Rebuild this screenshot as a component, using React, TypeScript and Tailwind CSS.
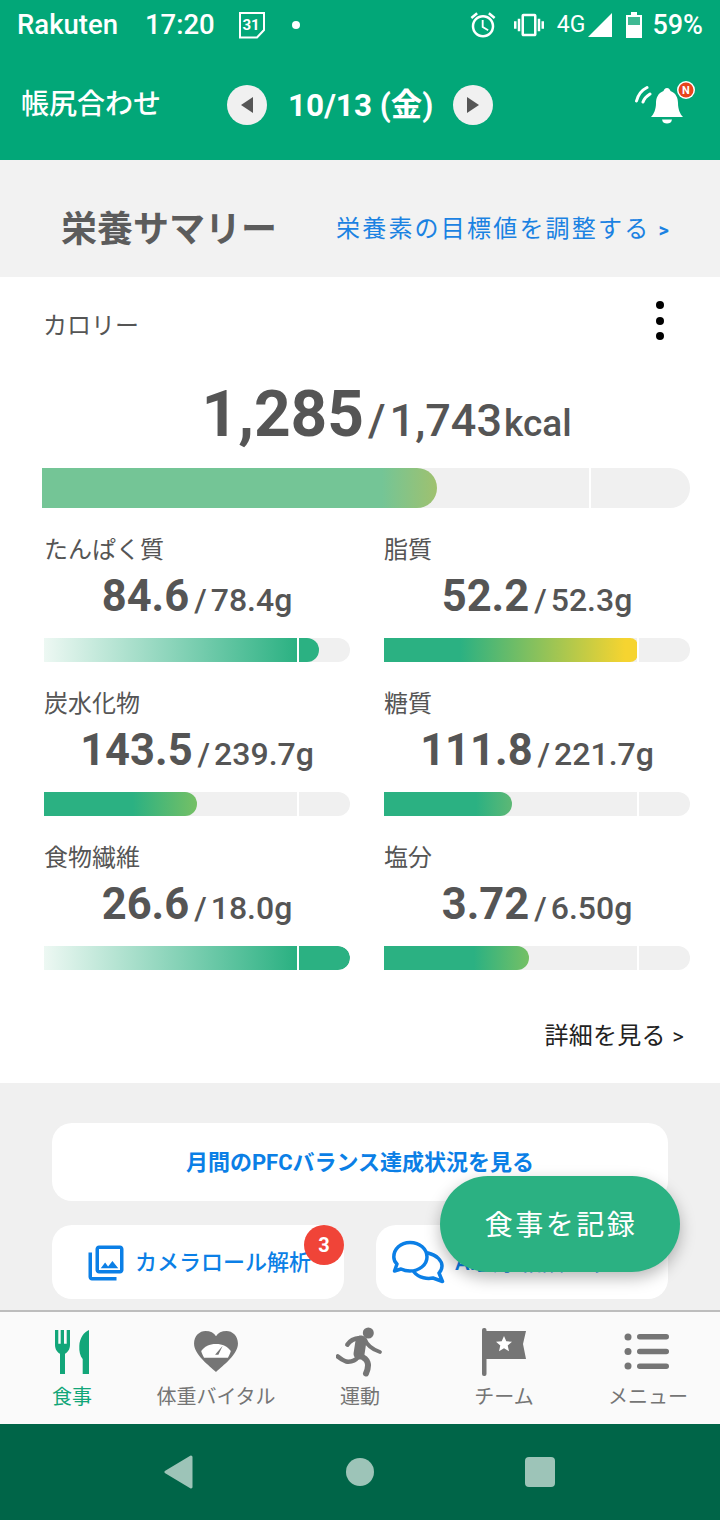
import React from "react";
import { MdOutlinePhotoLibrary, MdOutlineAlarm, MdVibration } from "react-icons/md";

const nutrients = [
  { label: "たんぱく質", v: "84.6", t: "78.4g", w: 275, bg: "linear-gradient(to right,#edf8f3 0%,#2bb182 92%)", solid: true },
  { label: "脂質", v: "52.2", t: "52.3g", w: 254, bg: "linear-gradient(to right,#2bb182 30%,#f6d430 95%)", small: true },
  { label: "炭水化物", v: "143.5", t: "239.7g", w: 153, bg: "linear-gradient(to right,#2bb182 58%,#75c065 100%)" },
  { label: "糖質", v: "111.8", t: "221.7g", w: 128, bg: "linear-gradient(to right,#2bb182 72%,#5db875 100%)" },
  { label: "食物繊維", v: "26.6", t: "18.0g", w: 306, bg: "linear-gradient(to right,#edf8f3 0%,#2bb182 82%)" },
  { label: "塩分", v: "3.72", t: "6.50g", w: 145, bg: "linear-gradient(to right,#2bb182 62%,#75c065 100%)" },
];

function Nutrient({ n }: { n: (typeof nutrients)[number] }) {
  return (
    <div className="w-[306px] h-[154px] flex flex-col">
      <div className="h-[28px] mt-[3px] text-[24px] leading-[28px] text-[#555]">{n.label}</div>
      <div className="h-[50px] mt-[8px] flex items-baseline justify-center text-[#555]">
        <span className="text-[43.500px] leading-[50px] font-bold">{n.v}</span>
        <span className="ml-[5px] text-[32px] leading-[50px] font-medium">/</span>
        <span className="ml-[4px] text-[32px] leading-[50px] font-medium">{n.t}</span>
      </div>
      <div className="relative h-[24px] mt-[16px] w-full rounded-r-full bg-[#f0f0f0] overflow-hidden">
        <div
          className={n.small ? "h-full rounded-r-lg" : "h-full rounded-r-full"}
          style={{ width: n.w, background: n.bg }}
        />
        <div className="absolute top-0 left-[253px] h-full w-[2px] bg-white" />
      </div>
    </div>
  );
}

function Utensils({ c }: { c: string }) {
  return (
    <svg width="48" height="48" viewBox="0 0 48 48" fill={c}>
      <path d="M7 1h3.300v13.700h2.400V1H16v13.700h2.700V1H22v15c0 4.500-2.500 7.500-5 8.700V45h-5V24.700C9.500 23.500 7 20.500 7 16z" />
      <path d="M41 1V45H34.700V30C32 27 31 22 31.300 17 31.600 9 36 3 41 1Z" />
    </svg>
  );
}

function HeartGauge() {
  return (
    <svg width="46" height="42" viewBox="0 0 48 44" className="mb-[3px]">
      <path fill="#757575" d="M24 43 C17 36 1 25 1 13 C1 5 7 0 13 0 C18 0 22 2 24 5.500 C26 2 30 0 35 0 C41 0 47 5 47 13 C47 25 31 36 24 43Z" />
      <path fill="#fff" d="M8.500 21 C12 16 17 13.500 24 13.500 C31 13.500 36 16 39.500 21 C39 23 37.500 26.500 36.500 28 H11.500 C10.500 26.500 9 23 8.500 21Z" />
      <path fill="#757575" d="M31 15.500 L26.500 25 L23 25 Z" />
    </svg>
  );
}

function Runner() {
  return (
    <svg width="48" height="50" viewBox="0 0 48 50" fill="none" stroke="#757575" strokeLinecap="round" strokeLinejoin="round" className="mb-[2px]">
      <circle cx="32.300" cy="6" r="5.500" fill="#757575" stroke="none" />
      <path d="M11.300 17.700 Q15 11.700 24 11" strokeWidth="4.500" />
      <path d="M25 14 L23 27" strokeWidth="11" />
      <path d="M29 12.500 Q32 21 44 25" strokeWidth="3.800" />
      <path d="M24 29 Q36 33 30 46.500" strokeWidth="6" />
      <path d="M22 30 Q18 35.500 10 34.500 Q6 33 1.800 29.500" strokeWidth="4.500" />
    </svg>
  );
}

function Flag() {
  return (
    <svg width="48" height="50" viewBox="0 0 48 50">
      <rect x="2" y="0" width="4.500" height="48" rx="2" fill="#757575" />
      <path fill="#757575" d="M5 3 H46 L43 16 L46 31 H5Z" />
      <path fill="#fff" d="M24 8l2.300 5.300 5.700.5-4.300 3.800 1.300 5.600-5-3-5 3 1.300-5.600-4.300-3.800 5.700-.5z" />
    </svg>
  );
}

function ListIcon() {
  return (
    <svg width="48" height="40" viewBox="0 0 48 40" fill="#757575">
      <circle cx="4" cy="4" r="3.500" />
      <circle cx="4" cy="18.500" r="3.500" />
      <circle cx="4" cy="33" r="3.500" />
      <rect x="13" y="1" width="32" height="5.500" rx="2.750" />
      <rect x="13" y="15.750" width="32" height="5.500" rx="2.750" />
      <rect x="13" y="30.500" width="32" height="5.500" rx="2.750" />
    </svg>
  );
}

function NavItem({ icon, label, active }: { icon: React.ReactNode; label: string; active?: boolean }) {
  return (
    <div className="w-[144px] flex flex-col items-center">
      <div className="h-[52px] w-full flex items-center justify-center">{icon}</div>
      <div className={active ? "mt-[5px] text-[20px] leading-[26px] text-[#12a679]" : "mt-[5px] text-[20px] leading-[26px] text-[#757575]"}>
        {label}
      </div>
    </div>
  );
}

export default function App() {
  return (
    <div className="relative w-[720px] h-[1520px] overflow-hidden flex flex-col bg-[#f0f0f0] font-['Roboto','Noto_Sans_CJK_JP',sans-serif]">
      <div className="h-[160px] shrink-0 bg-[#02a778] text-white flex flex-col">
        <div className="h-[50px] flex items-center pl-[17px] pr-[17px]">
          <span className="text-[27.500px] font-medium leading-[50px]">Rakuten</span>
          <span className="ml-[27px] text-[27.500px] font-medium leading-[50px]">17:20</span>
          <svg className="ml-[23px]" width="28" height="28" viewBox="0 0 28 28">
            <path d="M2 2 H26 V19 L19 26.500 H2Z" fill="none" stroke="#fff" strokeWidth="2" />
            <text x="13" y="19" textAnchor="middle" fontSize="15" fontWeight="700" fill="#fff">31</text>
          </svg>
          <span className="ml-[26px] w-[8px] h-[8px] rounded-full bg-white" />
          <div className="ml-auto flex items-center">
            <MdOutlineAlarm size={30} className="text-white" />
            <MdVibration size={30} className="ml-[16px] text-white" />
            <span className="ml-[13px] text-[23px] font-normal">4G</span>
            <svg width="26" height="26" viewBox="0 0 26 26" className="ml-[2px]"><path d="M1 25 L25 1 V25Z" fill="#fff" /></svg>
            <svg width="16" height="26" viewBox="0 0 16 26" className="ml-[13px]">
              <path d="M5 0 H11 V3 H16 V26 H0 V3 H5Z" fill="#fff" />
              <rect x="2" y="5" width="12" height="8" fill="#3fb993" />
            </svg>
            <span className="ml-[10px] text-[27px] font-medium">59%</span>
          </div>
        </div>
        <div className="relative flex-1 flex items-center pl-[21px]">
          <span className="w-[206px] text-[28px] leading-[40px] font-medium">帳尻合わせ</span>
          <span className="w-[40px] h-[40px] rounded-full bg-[#f0f0f0] flex items-center justify-center">
            <svg width="12" height="16" viewBox="0 0 12 16"><path d="M12 0V16L0 8Z" fill="#555" /></svg>
          </span>
          <span className="ml-[21px] mt-[2px] w-[145px] text-[31.500px] leading-[40px] font-bold whitespace-nowrap">10/13 (金)</span>
          <span className="ml-[20px] w-[40px] h-[40px] rounded-full bg-[#f0f0f0] flex items-center justify-center">
            <svg width="12" height="16" viewBox="0 0 12 16"><path d="M0 0V16L12 8Z" fill="#555" /></svg>
          </span>
          <svg className="ml-[142px]" width="64" height="48" viewBox="0 0 64 48">
            <path d="M1.500 20 C3 14 7 9 12 6.500 M8 21 C9 18 11 15.500 15 13" fill="none" stroke="#fff" strokeWidth="3" strokeLinecap="round" />
            <path d="M32 7 C34 7 35 8.500 35.500 10 C41 12 43 17 43 22 C43 28 45 33 48 36 H16 C19 33 21 28 21 22 C21 17 23 12 28.500 10 C29 8.500 30 7 32 7Z" fill="#fff" />
            <path d="M27 38.500 H37 C36.500 41.500 34.500 42.500 32 42.500 C29.500 42.500 27.500 41.500 27 38.500Z" fill="#fff" />
            <circle cx="51" cy="9" r="9" fill="#fff" />
            <circle cx="51" cy="9" r="7.500" fill="#e8431c" />
            <text x="51" y="13" textAnchor="middle" fontSize="11" fontWeight="700" fill="#fff">N</text>
          </svg>
        </div>
      </div>

      <div className="h-[117px] shrink-0 bg-[#f2f2f2] flex items-center pl-[61px] pt-[22px]">
        <span className="text-[36px] leading-[44px] font-bold text-[#5c5c5c] w-[275px]">栄養サマリー</span>
        <span className="text-[24px] leading-[32px] tracking-[2.200px] text-[#1b82e2] whitespace-nowrap">栄養素の目標値を調整する <b className="text-[20px]">&gt;</b></span>
      </div>

      <div className="h-[806px] shrink-0 bg-white flex flex-col">
        <div className="h-[98px] px-[43px] flex justify-between relative">
          <span className="mt-[33px] text-[24px] leading-[32px] text-[#555]">カロリー</span>
          <div className="mr-[13px] mt-[24px] flex flex-col gap-[7.500px] items-center w-[8px]">
            <span className="w-[8px] h-[8px] rounded-full bg-black" />
            <span className="w-[8px] h-[8px] rounded-full bg-black" />
            <span className="w-[8px] h-[8px] rounded-full bg-black" />
          </div>
        </div>
        <div className="h-[80px] pl-[53px] flex items-baseline justify-center text-[#555]">
          <span className="text-[64px] leading-[80px] font-bold">1,285</span>
          <span className="ml-[4px] text-[45px] leading-[80px] font-medium">/</span>
          <span className="ml-[4px] text-[45px] leading-[80px] font-medium">1,743</span>
          <span className="ml-[2px] text-[37px] leading-[80px] font-medium">kcal</span>
        </div>
        <div className="relative ml-[42px] mt-[13px] w-[648px] h-[40px] rounded-r-full bg-[#f0f0f0] overflow-hidden">
          <div className="h-full w-[395px] rounded-r-full bg-[linear-gradient(to_right,#74c596_86%,#9fc16f_100%)]" />
          <div className="absolute top-0 left-[547px] h-full w-[2px] bg-white" />
        </div>
        <div className="ml-[44px] mt-[25px] grid grid-cols-[306px_306px] gap-x-[34px]">
          {nutrients.map((n) => (
            <Nutrient key={n.label} n={n} />
          ))}
        </div>
        <div className="mt-[25px] pr-[36px] text-right text-[24px] leading-[32px] tracking-[0.300px] text-[#222]">
          詳細を見る <span className="text-[22px]">&gt;</span>
        </div>
      </div>

      <div className="flex-1 min-h-0 overflow-hidden pt-[40px] px-[52px]">
        <div className="h-[78px] rounded-[20px] bg-white flex items-center justify-center text-[22px] font-bold text-[#0b7fe6]">
          月間のPFCバランス達成状況を見る
        </div>
        <div className="mt-[24px] flex gap-[32px]">
          <div className="relative w-[292px] h-[74px] rounded-[20px] bg-white flex items-center pl-[33px] text-[22px] font-medium text-[#0b7fe6]">
            <MdOutlinePhotoLibrary size={42} className="mt-[2px] mr-[8px]" />
            カメラロール解析
            <span className="absolute left-[252px] top-0 w-[40px] h-[40px] rounded-full bg-[#f04438] text-white text-[20px] font-bold flex items-center justify-center">3</span>
          </div>
          <div className="w-[292px] h-[74px] rounded-[20px] bg-white flex items-center pl-[16px] text-[22px] font-medium text-[#0b7fe6] whitespace-nowrap">
            <svg width="54" height="44" viewBox="0 0 54 44" fill="none" stroke="#0b7fe6" strokeWidth="3.500" strokeLinejoin="round" strokeLinecap="round" className="mr-[9px] shrink-0">
              <path d="M18 2.500 C28 2.500 35 9 35 17 C35 25 27 31 18 31 C15 31 12 30.500 9 29 L2.500 31 L5 24 C2.800 22 1.800 19.500 1.800 17 C1.800 9 8.500 2.500 18 2.500Z" />
              <path d="M36 13 C45 15 50 21 50 26 C50 29 49 31 47 33 L50.500 41.500 L41 38 C36 39 27 38.500 22 32" />
            </svg>
            AI食事相談チャット
          </div>
        </div>
      </div>

      <div className="h-[114px] shrink-0 border-t-2 border-[#bdbdbd] bg-[#fafafa] flex pt-[15px]">
        <NavItem active label="食事" icon={<Utensils c="#12a679" />} />
        <NavItem label="体重バイタル" icon={<HeartGauge />} />
        <NavItem label="運動" icon={<Runner />} />
        <NavItem label="チーム" icon={<Flag />} />
        <NavItem label="メニュー" icon={<ListIcon />} />
      </div>

      <div className="h-[96px] shrink-0 bg-[#006548] flex items-center">
        <div className="w-[360px] flex justify-end">
          <svg width="30" height="34" viewBox="0 0 30 34" className="mr-[166px]">
            <path d="M27 2 L2 17 L27 32Z" fill="#9dc4b8" stroke="#9dc4b8" strokeWidth="3" strokeLinejoin="round" />
          </svg>
        </div>
        <span className="ml-[-14px] w-[28px] h-[28px] rounded-full bg-[#9dc4b8]" />
        <span className="ml-[151px] w-[30px] h-[30px] rounded-[4px] bg-[#9dc4b8]" />
      </div>

      <div className="absolute left-[440px] top-[1176px] w-[240px] h-[96px] pt-[3px] pl-[2px] rounded-[48px] bg-[#2bb182] shadow-[0_6px_16px_rgba(0,0,0,0.28)] flex items-center justify-center text-white text-[28px] tracking-[2.500px]">
        食事を記録
      </div>
    </div>
  );
}
